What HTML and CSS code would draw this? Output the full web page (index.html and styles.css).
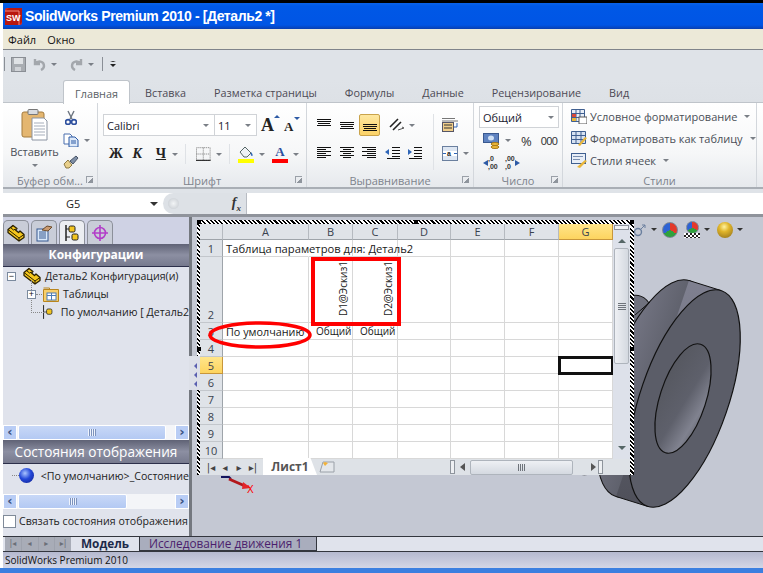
FILE: index.html
```html
<!DOCTYPE html>
<html lang="ru">
<head>
  <meta charset="UTF-8" />
  <title>SolidWorks Premium 2010 - [Деталь2 *]</title>
  <link rel="stylesheet" href="styles.css">
</head>
<body>
  <svg class="defs" width="0" height="0">
    <symbol id="al-t" viewBox="0 0 14 14"><path d="M0 1.5h14M0 3.5h14M1 5.5h12M0 7.5h14" stroke="#111" fill="none"/></symbol>
    <symbol id="al-m" viewBox="0 0 14 14"><path d="M0 4.5h14M0 6.5h14M1 8.5h12M0 10.5h14" stroke="#111" fill="none"/></symbol>
    <symbol id="al-b" viewBox="0 0 14 14"><path d="M0 6.5h14M0 8.5h14M1 10.5h12M0 12.5h14" stroke="#111" fill="none"/></symbol>
    <symbol id="al-l" viewBox="0 0 14 14"><path d="M0 1.5h14M0 3.5h9M0 5.5h14M0 7.5h9M0 9.5h14M0 11.5h9" stroke="#111" fill="none"/></symbol>
    <symbol id="al-c" viewBox="0 0 14 14"><path d="M0 1.5h14M3 3.5h8M0 5.5h14M3 7.5h8M0 9.5h14M3 11.5h8" stroke="#111" fill="none"/></symbol>
    <symbol id="al-r" viewBox="0 0 14 14"><path d="M0 1.5h14M5 3.5h9M0 5.5h14M5 7.5h9M0 9.5h14M5 11.5h9" stroke="#111" fill="none"/></symbol>
    <symbol id="cube" viewBox="0 0 18 18"><path d="M1 5.5 6 1.5l4 3-1.5 1.5 3 2.5 1.5-1.5 4 3.5v3L12 17 1 8.5z" fill="#f4c61c" stroke="#2b2100" stroke-width="1.3" stroke-linejoin="round"/><path d="M1 5.5 12 14l5-3.5M12 14v3M6 1.5 3.5 3.5l3 2.5 2-1" fill="none" stroke="#2b2100"/></symbol>
    <symbol id="cfg" viewBox="0 0 18 18"><path d="M3 1v16" stroke="#222" stroke-width="1.5"/><path d="M3 5h4M3 13h4" stroke="#222"/><rect x="6" y="2" width="6" height="6" rx="1.5" fill="#f2c521" stroke="#222"/><rect x="9" y="10" width="6" height="6" rx="1.5" fill="#f2c521" stroke="#222"/></symbol>
  </svg>

  <div class="topline"></div>
  <header class="titlebar">
    <svg class="sw-logo" width="17" height="17" viewBox="0 0 17 17"><rect width="17" height="17" rx="2" fill="#d9281e"/><path d="M0 3 4 0h13v14l-3 3H0z" fill="#b8170f"/><path d="M0 3h14v14" fill="none" stroke="#f08a80"/><text x="1" y="13" class="sw-letters">SW</text></svg>
    <span class="title-text">SolidWorks Premium 2010 - [Деталь2 *]</span>
  </header>
  <nav class="menubar"><span>Файл</span><span>Окно</span></nav>

  <div class="qat">
    <i class="qat-sep"></i>
    <svg width="15" height="15" viewBox="0 0 15 15"><rect x=".5" y=".5" width="14" height="14" fill="#a9adb2" stroke="#8a8e94"/><rect x="3" y="1" width="9" height="6" fill="#dfe2e5"/><rect x="4" y="10" width="6" height="4" fill="#d0d3d7"/></svg>
    <svg class="qat-undo" width="13" height="14" viewBox="0 0 13 14"><path d="M2 2v5h5M2 7c3-4 9-3 9 2 0 2-1 3-3 4" fill="none" stroke="#a3a7ac" stroke-width="2.4"/></svg>
    <b class="caret qat-caret"></b>
    <svg class="qat-redo" width="13" height="14" viewBox="0 0 13 14"><path d="M11 2v5H6M11 7C8 3 2 4 2 9c0 2 1 3 3 4" fill="none" stroke="#a3a7ac" stroke-width="2.4"/></svg>
    <b class="caret qat-caret"></b>
    <i class="qat-sep"></i>
    <span class="qat-more"></span>
  </div>

  <div class="tabstrip">
    <span class="rtab active">Главная</span>
    <span class="rtab">Вставка</span>
    <span class="rtab">Разметка страницы</span>
    <span class="rtab">Формулы</span>
    <span class="rtab">Данные</span>
    <span class="rtab">Рецензирование</span>
    <span class="rtab">Вид</span>
  </div>

  <section class="ribbon">
    <div class="group g-clip">
      <div class="group-body clip-body">
        <div class="paste">
          <svg width="27" height="32" viewBox="0 0 27 32"><rect x="1" y="3" width="22" height="25" rx="2" fill="#e4b670" stroke="#a37a3c"/><rect x="7" y="0.5" width="10" height="5" rx="1" fill="#d9dce0" stroke="#777"/><path d="M11 9h12l3 3v19H11z" fill="#fff" stroke="#8b94a2"/><path d="M13 14h10M13 17h11M13 20h11M13 23h11M13 26h11" stroke="#a5adba"/></svg>
          <span>Вставить</span>
          <b class="caret"></b>
        </div>
        <div class="clip-tools">
          <svg width="12" height="15" viewBox="0 0 12 15"><path d="M3 1l4 8M9 1 5 9" stroke="#6d7580" stroke-width="1.4"/><circle cx="3" cy="12" r="2.4" fill="none" stroke="#2d4f9e" stroke-width="1.6"/><circle cx="9" cy="12" r="2.4" fill="none" stroke="#2d4f9e" stroke-width="1.6"/></svg>
          <span class="tool-row"><svg width="16" height="14" viewBox="0 0 16 14"><path d="M1 1h6l2 2v8H1z" fill="#fff" stroke="#4a6fae"/><path d="M6 4h6l3 3v7H6z" fill="#dce8f8" stroke="#2d5aa5"/><path d="M8 8h5M8 10h5" stroke="#2d5aa5"/></svg><b class="caret"></b></span>
          <svg width="16" height="14" viewBox="0 0 16 14"><path d="M1 9l4-4 4 5-3 3H3z" fill="#e9d08c" stroke="#8d7a45"/><path d="M7 6l6-5 2 2-5 6z" fill="#7f8fa6" stroke="#4a5568"/></svg>
        </div>
      </div>
      <div class="group-label"><span>Буфер обм...</span><i class="launcher"></i></div>
    </div>

    <div class="group g-font">
      <div class="group-body font-body">
        <div class="font-row1">
          <span class="combo c-name">Calibri<b class="caret"></b></span>
          <span class="combo c-size">11<b class="caret"></b></span>
          <span class="grow-a">A<em></em></span>
          <span class="shrink-a">A<em></em></span>
        </div>
        <div class="font-row2">
          <span class="fmt f-b">Ж</span>
          <span class="fmt f-i">К</span>
          <span class="fmt f-u">Ч</span>
          <b class="caret"></b>
          <i class="vsep"></i>
          <svg width="15" height="14" viewBox="0 0 15 14"><path d="M.5.5h14v13H.5zM.5 7h14M7.5.5v13" fill="none" stroke="#777" stroke-dasharray="1 1"/><path d="M0 13.5h15" stroke="#111"/></svg>
          <b class="caret"></b>
          <i class="vsep"></i>
          <span class="paint"><svg width="16" height="12" viewBox="0 0 16 12"><path d="M2 6l5-5 6 6-4 4H6z" fill="#eef1f5" stroke="#566"/><path d="M13 6c2 2 2 4 1 4s-2-2-1-4z" fill="#2f66b8"/></svg><i class="swatch yellow"></i></span>
          <b class="caret"></b>
          <span class="paint"><span class="letter-a">A</span><i class="swatch red"></i></span>
          <b class="caret"></b>
        </div>
      </div>
      <div class="group-label"><span>Шрифт</span><i class="launcher"></i></div>
    </div>

    <div class="group g-align">
      <div class="group-body align-body">
        <div class="align-main">
          <div class="align-row top">
            <svg width="14" height="14"><use href="#al-t"/></svg>
            <svg width="14" height="14"><use href="#al-m"/></svg>
            <span class="picked"><svg width="14" height="14"><use href="#al-b"/></svg></span>
            <svg class="orient" width="16" height="14" viewBox="0 0 16 14"><path d="M1 9 9 1M4 12l8-8" stroke="#222" stroke-width="1.6" fill="none"/><path d="M9 12l6-2-2-1" stroke="#555" fill="none"/></svg>
            <b class="caret"></b>
          </div>
          <div class="align-row">
            <svg width="14" height="14"><use href="#al-l"/></svg>
            <svg width="14" height="14"><use href="#al-c"/></svg>
            <svg class="al-right" width="14" height="14"><use href="#al-r"/></svg>
            <svg class="indent" width="15" height="14" viewBox="0 0 15 14"><path d="M7 1.5h8M7 4.5h8M7 7.5h8M7 10.5h8M2 12.5h13" stroke="#111"/><path d="M0 6l4-3v6z" fill="#2f66b8"/></svg>
            <svg class="indent" width="15" height="14" viewBox="0 0 15 14"><path d="M7 1.5h8M7 4.5h8M7 7.5h8M7 10.5h8M2 12.5h13" stroke="#111"/><path d="M5 6 1 3v6z" fill="#2f66b8"/></svg>
          </div>
        </div>
        <i class="vsep tall"></i>
        <div class="align-side">
          <svg width="16" height="15" viewBox="0 0 16 15"><path d="M0 1.5h13M0 4h16" stroke="#777"/><rect x=".5" y="5.5" width="11" height="9" fill="#f0ce8a" stroke="#556"/><path d="M2 8h8M2 11h8" stroke="#333"/><path d="M15 6v4h-3" stroke="#2f66b8" fill="none"/></svg>
          <span class="tool-row"><svg width="16" height="15" viewBox="0 0 16 15"><rect x=".5" y=".5" width="15" height="14" fill="#dde6f2" stroke="#6a7f9e"/><rect x="1" y="5" width="14" height="5" fill="#fff"/><text x="5" y="10" class="mini-a">a</text><path d="M1 7.5h3M12 7.5h3" stroke="#2f66b8"/></svg><b class="caret"></b></span>
        </div>
      </div>
      <div class="group-label"><span>Выравнивание</span><i class="launcher"></i></div>
    </div>

    <div class="group g-num">
      <div class="group-body num-body">
        <span class="combo c-num">Общий<b class="caret"></b></span>
        <div class="num-row">
          <svg width="17" height="16" viewBox="0 0 17 16"><rect x=".5" y=".5" width="15" height="9" fill="#5e82c0" stroke="#39588f"/><ellipse cx="8" cy="5" rx="3" ry="2.5" fill="#cfe0f5"/><ellipse cx="12" cy="11" rx="4" ry="1.5" fill="#efb93a" stroke="#a6791b"/><ellipse cx="12" cy="14" rx="4" ry="1.5" fill="#efb93a" stroke="#a6791b"/></svg>
          <b class="caret"></b>
          <span class="pct">%</span>
          <span class="thou">000</span>
        </div>
        <div class="num-row dec">
          <span class="dec-btn"><em class="ar-l"></em><span>,0<br>,00</span></span>
          <span class="dec-btn"><span>,00<br>,0</span><em class="ar-r"></em></span>
        </div>
      </div>
      <div class="group-label"><span>Число</span><i class="launcher"></i></div>
    </div>

    <div class="group g-styles">
      <div class="group-body styles-body">
        <div class="style-row"><svg width="16" height="15" viewBox="0 0 16 15"><path d="M.5.5h13v12H.5zM.5 4.5h13M.5 8.5h13M5 .5v12M9 .5v12" fill="#e8eef7" stroke="#3f5f90"/><rect x="1" y="5" width="4" height="3" fill="#d8483a"/><rect x="1" y="9" width="4" height="3" fill="#e9b63a"/><rect x="8" y="8" width="8" height="7" fill="#fff" stroke="#555"/></svg><span>Условное форматирование</span><b class="caret"></b></div>
        <div class="style-row"><svg width="16" height="15" viewBox="0 0 16 15"><path d="M.5.5h14v12H.5zM.5 4.5h14M.5 8.5h14M5 .5v12M10 .5v12" fill="#d7e2f2" stroke="#3f5f90"/><path d="M7 14l7-8 2 1-7 8z" fill="#e9b63a"/></svg><span>Форматировать как таблицу</span><b class="caret"></b></div>
        <div class="style-row"><svg width="16" height="15" viewBox="0 0 16 15"><rect x=".5" y=".5" width="14" height="10" fill="#e8eef7" stroke="#3f5f90"/><path d="M2 3.5h10M2 6.5h7" stroke="#7a8fb0"/><path d="M6 14l8-7 2 1-7 7z" fill="#e9b63a"/></svg><span>Стили ячеек</span><b class="caret"></b></div>
      </div>
      <div class="group-label center"><span>Стили</span></div>
    </div>
  </section>

  <div class="formula-bar">
    <div class="namebox"><span>G5</span><b class="caret dark"></b></div>
    <div class="fx-zone"><i class="fx-knob"></i><span class="fx">f<sub>x</sub></span></div>
    <div class="formula-input"></div>
  </div>

  <main class="workspace">
    <aside class="panel">
      <div class="panel-tabs">
        <span class="ptab"><svg width="18" height="18"><use href="#cube"/></svg></span>
        <span class="ptab"><svg width="18" height="18" viewBox="0 0 18 18"><rect x="2" y="5" width="11" height="12" fill="#d8e8fa" stroke="#36588f"/><path d="M4 8h7M4 10h7M4 12h7M4 14h7" stroke="#36588f"/><path d="M7 6l5-4 5 1-4 4z" fill="#c99a70" stroke="#6d4c2c"/></svg></span>
        <span class="ptab current"><svg width="18" height="18"><use href="#cfg"/></svg></span>
        <span class="ptab"><svg width="16" height="16" viewBox="0 0 16 16"><circle cx="8" cy="8" r="5.5" fill="none" stroke="#b23ec8" stroke-width="1.6"/><path d="M8 0v16M0 8h16" stroke="#b23ec8" stroke-width="1.6"/></svg></span>
      </div>
      <h2 class="panel-head">Конфигурации</h2>
      <ul class="tree">
        <li class="node lvl0"><i class="box">−</i><svg width="18" height="18"><use href="#cube"/></svg><span>Деталь2 Конфигурация(и)</span></li>
        <li class="node lvl1"><i class="box">+</i><svg width="16" height="15" viewBox="0 0 16 15"><path d="M.5 2.5h15v12H.5z" fill="#f8cf6a" stroke="#b9851d"/><path d="M.5 1h6v2" fill="none" stroke="#b9851d"/><rect x="4" y="6" width="9" height="7" fill="#fff" stroke="#4c7db8"/><path d="M4 8.5h9M8.5 6v7" stroke="#4c7db8"/></svg><span>Таблицы</span></li>
        <li class="node lvl2"><svg width="14" height="18" viewBox="0 0 14 18"><path d="M2 0v18" stroke="#333" stroke-width="1.4"/><path d="M2 9h5" stroke="#333"/><rect x="6" y="5" width="7" height="7" rx="2" fill="#f2c521" stroke="#222"/></svg><span>По умолчанию [ Деталь2</span></li>
      </ul>
      <div class="scrollbar"><em class="sb-btn">‹</em><span class="sb-thumb wide"><u></u></span><em class="sb-btn right">›</em></div>
      <h2 class="panel-head small">Состояния отображения</h2>
      <div class="state-row"><i class="dots"></i><i class="ball"></i><span>&lt;По умолчанию&gt;_Состояние</span></div>
      <div class="scrollbar lower"><em class="sb-btn">‹</em><span class="sb-thumb"><u></u></span><em class="sb-btn right">›</em></div>
      <label class="link-row"><i class="check"></i><span>Связать состояния отображения</span></label>
    </aside>

    <div class="viewport">
      <svg class="part" width="200" height="270" viewBox="0 0 200 270">
        <defs>
          <linearGradient id="rim" gradientUnits="userSpaceOnUse" x1="0" y1="25" x2="0" y2="250"><stop offset="0" stop-color="#7f8090"/><stop offset=".25" stop-color="#797a89"/><stop offset=".5" stop-color="#5e606b"/><stop offset="1" stop-color="#4f505a"/></linearGradient>
          <linearGradient id="bore" x1="0.8" y1="0" x2="0.2" y2="1"><stop offset="0" stop-color="#55575f"/><stop offset=".55" stop-color="#5e606b"/><stop offset=".85" stop-color="#80828f"/><stop offset="1" stop-color="#686a75"/></linearGradient>
        </defs>
        <ellipse cx="67" cy="130" rx="94" ry="35" transform="rotate(-71 67 130)" fill="#70727e" stroke="#111"/>
        <ellipse cx="109.5" cy="133.5" rx="114" ry="44" transform="rotate(-71 109.5 133.5)" fill="url(#rim)" stroke="#111"/>
        <path d="M178 35.5 146 25.5 73 241.5 105 251.5z" fill="url(#rim)"/>
        <path d="M178 35.5 146 25.5M105 251.5 73 241.5" stroke="#111" fill="none"/>
        <path d="M92 60 107 47" stroke="#111" fill="none"/>
        <ellipse cx="141.5" cy="143.5" rx="114" ry="44" transform="rotate(-71 141.5 143.5)" fill="#5b5d68" stroke="#111" stroke-width="1.2"/>
        <ellipse cx="140" cy="143.5" rx="57" ry="23" transform="rotate(-72 140 143.5)" fill="url(#bore)" stroke="#111" stroke-width="1.2"/>
      </svg>

      <div class="hud">
        <svg width="14" height="14" viewBox="0 0 14 14"><circle cx="5" cy="9" r="3.5" fill="none" stroke="#6a7f9e" stroke-width="1.4"/><path d="M8 6l4-4M9 2h3v3" fill="none" stroke="#6a7f9e"/></svg><b class="caret dark"></b>
        <i class="globe"></i>
        <span class="hud-scene"><i class="globe small"></i><i class="checker"></i></span><b class="caret dark"></b>
        <i class="gold"></i><b class="caret dark"></b>
      </div>

      <div class="triad"><svg width="36" height="18" viewBox="0 0 36 18"><path d="M0 1h8l2 2" stroke="#13135e" stroke-width="2" fill="none"/><path d="M8 3 24 10" stroke="#b3161a" stroke-width="3"/><path d="M22 6l8 6-9 1z" fill="#e3252b"/><text x="26" y="17" class="axis">X</text></svg></div>

      <div class="sheet-window">
        <i class="handle h-tl"></i><i class="handle h-t"></i><i class="handle h-tr"></i><i class="handle h-r"></i><i class="handle h-l"></i>
        <div class="sheet-top">
          <table class="sheet">
            <colgroup><col class="c0"><col class="ca"><col class="cb"><col class="cc"><col class="cd"><col class="ce"><col class="cf"><col class="cg"></colgroup>
            <tr class="r-head"><th class="corner"></th><th>A</th><th>B</th><th>C</th><th>D</th><th>E</th><th>F</th><th class="sel">G</th></tr>
            <tr><th>1</th><td class="over">Таблица параметров для: Деталь2</td><td></td><td></td><td></td><td></td><td></td><td></td></tr>
            <tr class="r-tall"><th class="bottom">2</th><td></td><td class="vert"><span>D1@Эскиз1</span></td><td class="vert"><span>D2@Эскиз1</span></td><td></td><td></td><td></td><td></td></tr>
            <tr><th>3</th><td class="ind">По умолчанию</td><td class="gen">Общий</td><td class="gen">Общий</td><td></td><td></td><td></td><td></td></tr>
            <tr><th>4</th><td></td><td></td><td></td><td></td><td></td><td></td><td></td></tr>
            <tr><th class="sel">5</th><td></td><td></td><td></td><td></td><td></td><td></td><td class="active-cell"></td></tr>
            <tr><th>6</th><td></td><td></td><td></td><td></td><td></td><td></td><td></td></tr>
            <tr><th>7</th><td></td><td></td><td></td><td></td><td></td><td></td><td></td></tr>
            <tr><th>8</th><td></td><td></td><td></td><td></td><td></td><td></td><td></td></tr>
            <tr><th>9</th><td></td><td></td><td></td><td></td><td></td><td></td><td></td></tr>
            <tr><th>10</th><td></td><td></td><td></td><td></td><td></td><td></td><td></td></tr>
          </table>
          <div class="vscroll">
            <i class="split-v"></i>
            <b class="tri up"></b>
            <span class="v-thumb"><u></u></span>
            <b class="tri down"></b>
          </div>
        </div>
        <div class="sheet-tabs">
          <div class="sheet-nav"><span>|◂</span><span>◂</span><span>▸</span><span>▸|</span></div>
          <span class="sheet-tab">Лист1</span>
          <svg class="new-sheet" width="16" height="12" viewBox="0 0 16 12"><path d="M1 11 4 1h11v10z" fill="#e4e7eb" stroke="#9aa0a8"/><path d="M4 2l2 3 3-3-3-1z" fill="#f2b23a"/></svg>
          <i class="split-h first"></i>
          <b class="tri left"></b>
          <span class="h-thumb"><u></u></span>
          <b class="tri right"></b>
          <i class="split-h"></i>
        </div>
        <svg class="annot" width="210" height="135" viewBox="0 0 210 135">
          <rect x="116" y="39" width="86" height="65" fill="none" stroke="#f00" stroke-width="4"/>
          <ellipse cx="63" cy="115" rx="50" ry="12" fill="none" stroke="#f00" stroke-width="3.5"/>
        </svg>
      </div>
    </div>
    <div class="splitter-arrows"><em></em><em></em><em></em></div>
  </main>

  <div class="model-tabs">
    <div class="nav-btns"><span>|◂</span><span>◂</span><span>▸</span><span>▸|</span></div>
    <span class="mtab on">Модель</span>
    <span class="mtab">Исследование движения 1</span>
  </div>
  <footer class="statusbar">SolidWorks Premium 2010</footer>
  <div class="taskbar"></div>
</body>
</html>
```

FILE: styles.css
```css
* {
  box-sizing: border-box;
}

html, body {
  margin: 0;
  padding: 0;
}

body {
  width: 763px;
  height: 573px;
  overflow: hidden;
  background: #fff;
  font-family: 'DejaVu Sans', sans-serif;
  font-size: 10px;
  color: #222;
}

i, em, b, u {
  display: block;
  font-style: normal;
}

.defs {
  position: absolute;
}

.topline {
  height: 3px;
  background: #000;
}

.titlebar {
  height: 26px;
  margin-left: 3px;
  display: flex;
  align-items: center;
  gap: 3px;
  padding: 0 0 0 2px;
  background: linear-gradient(to bottom, #0a63e8 0, #0058e6 3px, #0055e5 22px, #0a3fb0 26px);
}

.sw-letters {
  font: bold 9px 'Liberation Sans', sans-serif;
  fill: #fff;
}

.title-text {
  font: bold 14px 'Liberation Sans', sans-serif;
  letter-spacing: -0.4px;
  color: #fff;
  white-space: nowrap;
}

.menubar {
  height: 20px;
  margin-left: 3px;
  padding-left: 5px;
  display: flex;
  align-items: center;
  gap: 11px;
  background: #ece9d8;
  font: 11px 'Open Sans', sans-serif;
  color: #111;
}

.qat {
  height: 31px;
  margin-left: 3px;
  padding: 7px 0 0 1px;
  display: flex;
  align-items: flex-start;
  border-top: 1px solid #80848a;
  background: #dfe3e8;
}

.qat-sep {
  width: 1px;
  height: 14px;
  background: #8a8f96;
  margin-right: 6px;
}

.qat-undo {
  margin-left: 7px;
}

.qat-redo {
  margin-left: 5px;
}

.qat-caret {
  margin: 6px 8px 0 5px;
}

.qat-more {
  width: 6px;
  height: 6px;
  margin: 4px 0 0 1px;
  border-top: 1px solid #222;
  border-left: 3px solid transparent;
  border-right: 3px solid transparent;
}

.qat-more::after {
  content: '';
  display: block;
  margin: 2px -3px 0;
  border-top: 3px solid #222;
  border-left: 3px solid transparent;
  border-right: 3px solid transparent;
}

.caret {
  width: 0;
  height: 0;
  border-top: 3px solid #7a7f86;
  border-left: 3px solid transparent;
  border-right: 3px solid transparent;
  flex: none;
}

.caret.dark {
  border-top-color: #333;
}

.tabstrip {
  height: 23px;
  margin-left: 3px;
  padding-left: 60px;
  display: flex;
  background: linear-gradient(to bottom, #dfe3e8, #dde1e6);
  border-bottom: 1px solid #bfc4ca;
  font: 10.8px 'Open Sans', sans-serif;
  color: #4d4a55;
}

.rtab {
  padding: 5px 14px 0 14px;
  white-space: nowrap;
}

.rtab:nth-child(2) { padding: 5px 14px 0 15px; }

.rtab.active {
  height: 24px;
  width: 67px;
  padding: 5px 0 0;
  text-align: center;
  background: #fff;
  border: 1px solid #bfc4ca;
  border-bottom: none;
  border-radius: 3px 3px 0 0;
  color: #5a5f66;
}

.ribbon {
  height: 86px;
  margin-left: 3px;
  display: flex;
  border-bottom: 2px solid #a9aeb5;
  background: linear-gradient(to bottom, #ffffff, #f6f7f8 60%, #e6e9ed);
}

.group {
  display: flex;
  flex-direction: column;
  border-right: 1px solid #d3d7dc;
  flex: none;
}

.g-clip { width: 95px; }
.g-font { width: 209px; }
.g-align { width: 167px; }
.g-num { width: 89px; }
.g-styles { width: 194px; }

.group-body {
  height: 70px;
  flex: none;
}

.group-label {
  height: 14px;
  display: flex;
  align-items: center;
  justify-content: center;
  position: relative;
  font: 11px 'Open Sans', sans-serif;
  color: #7d838c;
  white-space: nowrap;
}

.launcher {
  position: absolute;
  right: 4px;
  top: 3px;
  width: 7px;
  height: 7px;
  border-top: 1px solid #9aa0a8;
  border-left: 1px solid #9aa0a8;
  background: linear-gradient(135deg, transparent 55%, #8f959d 55%);
}

.clip-body {
  display: flex;
  padding: 6px 0 0 8px;
}

.paste {
  width: 47px;
  display: flex;
  flex-direction: column;
  align-items: center;
  font: 11px 'Open Sans', sans-serif;
  color: #4a4f57;
}

.paste span {
  margin-top: 3px;
}

.paste .caret {
  margin-top: 5px;
}

.clip-tools {
  margin-left: 5px;
  padding-top: 1px;
  display: flex;
  flex-direction: column;
  align-items: flex-start;
  gap: 8px;
}

.clip-tools > svg:first-child {
  margin-left: 2px;
}

.tool-row {
  display: flex;
  align-items: center;
  gap: 5px;
}

.font-body {
  padding: 11px 0 0 5px;
}

.font-row1 {
  display: flex;
  align-items: center;
  height: 22px;
}

.combo {
  height: 22px;
  display: flex;
  align-items: center;
  justify-content: space-between;
  padding: 0 5px 0 3px;
  border: 1px solid #d0d3d7;
  background: #fff;
  font: 11px 'Open Sans', sans-serif;
  color: #1a1a2e;
}

.c-name { width: 112px; }
.c-size { width: 43px; margin-left: -1px; }

.grow-a, .shrink-a {
  font: bold 18px 'Liberation Serif', serif;
  color: #222;
  position: relative;
}

.grow-a {
  margin-left: 4px;
  width: 20px;
}

.shrink-a {
  margin-left: 3px;
  font-size: 13px;
  margin-top: 3px;
}

.grow-a em, .shrink-a em {
  position: absolute;
  top: 0;
  right: 1px;
  border-left: 3px solid transparent;
  border-right: 3px solid transparent;
  border-bottom: 3px solid #2d5aa5;
}

.shrink-a em {
  top: -2px;
  right: -7px;
  border-bottom: none;
  border-top: 3px solid #2d5aa5;
}

.font-row2 {
  display: flex;
  align-items: center;
  height: 18px;
  margin-top: 9px;
  padding-left: 5px;
}

.fmt {
  font: bold 14px 'Liberation Serif', serif;
  color: #222;
  width: 24px;
  padding-left: 1px;
}

.f-i { font-style: italic; }
.f-u { text-decoration: underline; width: 16px; }

.font-row2 > .caret {
  margin: 0 7px 0 5px;
}

.font-row2 .f-u + .caret {
  margin-left: 2px;
}

.vsep {
  width: 1px;
  height: 20px;
  background: #dfe2e6;
  margin-right: 10px;
}

.vsep + .paint {
  margin-left: -2px;
}

.vsep.tall {
  height: 56px;
  margin: 0;
}

.paint {
  width: 16px;
  display: flex;
  flex-direction: column;
  align-items: center;
}

.letter-a {
  font: bold 13px/12px 'Liberation Serif', serif;
  color: #2d4f9e;
}

.swatch {
  width: 16px;
  height: 4px;
  margin-top: 1px;
}

.swatch.yellow { background: #ffff00; }
.swatch.red { background: #ff0000; }

.align-body {
  display: flex;
  padding: 11px 0 0 10px;
}

.align-main {
  width: 116px;
}

.align-row {
  display: flex;
  align-items: center;
  gap: 9px;
  height: 22px;
}

.align-row.top {
  margin-bottom: 6px;
}

.picked {
  width: 21px;
  height: 22px;
  margin-left: -4px;
  display: flex;
  align-items: center;
  justify-content: center;
  border: 1px solid #c9a34b;
  border-radius: 2px;
  background: linear-gradient(to bottom, #fde7a0, #fbd268);
}

.al-right {
  margin-left: -1px;
}

.indent + .indent {
  margin-left: -2px;
}

.align-row .caret {
  margin-left: -5px;
}

.align-side {
  padding: 3px 0 0 8px;
  display: flex;
  flex-direction: column;
  gap: 14px;
}

.mini-a {
  font: bold 7px 'Liberation Sans', sans-serif;
  fill: #222;
}

.num-body {
  padding: 3px 0 0 5px;
}

.c-num {
  width: 80px;
  padding-right: 4px;
}

.num-row {
  display: flex;
  align-items: center;
  margin-top: 4px;
  padding-left: 4px;
  height: 17px;
}

.num-row .caret {
  margin-left: 5px;
}

.pct {
  margin-left: 10px;
  font: 13px 'Open Sans', sans-serif;
  color: #333;
}

.thou {
  margin-left: 9px;
  font: 11px 'Liberation Sans', sans-serif;
  letter-spacing: -0.6px;
  color: #333;
}

.num-row.dec {
  gap: 6px;
  margin-top: 5px;
}

.dec-btn {
  width: 16px;
  display: flex;
  align-items: center;
  font: bold 7px/8px 'Liberation Sans', sans-serif;
  color: #333;
}

.ar-l, .ar-r {
  border-top: 3px solid transparent;
  border-bottom: 3px solid transparent;
  flex: none;
}

.ar-l { border-right: 5px solid #2d5aa5; }
.ar-r { border-left: 5px solid #2d5aa5; }

.styles-body {
  padding: 5px 0 0 8px;
  display: flex;
  flex-direction: column;
  gap: 6px;
}

.style-row {
  display: flex;
  align-items: center;
  gap: 3px;
  height: 16px;
  font: 11px 'Open Sans', sans-serif;
  color: #4a4f57;
  white-space: nowrap;
}

.style-row .caret {
  margin-left: 4px;
}

.formula-bar {
  height: 28px;
  margin-left: 3px;
  display: flex;
  border-top: 4px solid #dfe3e8;
  border-bottom: 3px solid #8f939b;
  background: #fff;
}

.namebox {
  width: 160px;
  display: flex;
  align-items: center;
  justify-content: space-between;
  padding: 0 0 0 63px;
  font: 11px 'Open Sans', sans-serif;
  color: #222;
}

.namebox .caret {
  margin-right: 5px;
  border-top-width: 4px;
  border-left-width: 4px;
  border-right-width: 4px;
}

.fx-zone {
  width: 84px;
  display: flex;
  align-items: center;
  justify-content: space-between;
  padding: 0 3px 0 5px;
  border-right: 1px solid #b8bcc3;
  background: #dde1e6;
  border-radius: 12px 0 0 12px;
}

.fx-knob {
  width: 11px;
  height: 11px;
  border-radius: 50%;
  background: radial-gradient(circle, #f2f4f6, #c3c8ce);
}

.fx {
  font: italic bold 14px 'Liberation Serif', serif;
  color: #333;
  margin-right: 2px;
}

.fx sub {
  font-size: 9px;
}

.formula-input {
  flex: 1;
}

.workspace {
  height: 319px;
  margin-left: 3px;
  display: flex;
  position: relative;
}

.panel {
  width: 189px;
  flex: none;
  display: flex;
  flex-direction: column;
  background: #e0e3ec;
  border-right: 3px solid #74787f;
  font: 10.6px 'Open Sans', sans-serif;
  color: #222;
}

.panel-tabs {
  height: 27px;
  display: flex;
  gap: 2px;
  padding: 3px 0 0;
  background: #cfd2e4;
}

.ptab {
  width: 26px;
  height: 24px;
  display: flex;
  align-items: center;
  justify-content: center;
  background: #c9cdd8;
  border: 1px solid #8c909a;
  border-bottom: none;
  border-radius: 5px 5px 0 0;
}

.ptab.current {
  background: #eceef2;
}

.panel-head {
  margin: 0;
  height: 23px;
  text-align: center;
  font: bold 12px/22px 'Open Sans', sans-serif;
  color: #fff;
  background: linear-gradient(to bottom, #5f6275, #8c8fa2 50%, #777a8e);
  border-bottom: 1px solid #2c2f4a;
}

.panel-head.small {
  font: 13.6px/23px 'Open Sans', sans-serif;
  height: 24px;
}

.tree {
  list-style: none;
  margin: 0;
  padding: 0 0 0 4px;
  height: 158px;
  overflow: hidden;
}

.node {
  height: 18px;
  display: flex;
  align-items: center;
  gap: 4px;
  white-space: nowrap;
  position: relative;
}

.lvl1 {
  padding-left: 20px;
}

.lvl1::before {
  content: '';
  position: absolute;
  left: 24px;
  top: -5px;
  height: 10px;
  border-left: 1px dotted #888;
}

.lvl1::after {
  content: '';
  position: absolute;
  left: 29px;
  top: 9px;
  width: 6px;
  border-top: 1px dotted #888;
}

.lvl2 {
  padding-left: 35px;
  gap: 8px;
}

.lvl2::before {
  content: '';
  position: absolute;
  left: 24px;
  top: -5px;
  height: 14px;
  width: 12px;
  border-left: 1px dotted #888;
  border-bottom: 1px dotted #888;
}

.box {
  width: 9px;
  height: 9px;
  border: 1px solid #7b8a9e;
  background: #fff;
  font: 9px/7px 'Liberation Sans', sans-serif;
  text-align: center;
  color: #111;
  margin-right: 3px;
  position: relative;
  z-index: 1;
}

.scrollbar {
  height: 15px;
  display: flex;
  justify-content: space-between;
  background: #f4f5f8;
  position: relative;
}

.scrollbar.lower {
  margin-top: 7px;
}

.sb-btn {
  width: 14px;
  text-align: center;
  background: #b9cdf5;
  border: 1px solid #fff;
  font: bold 13px/11px 'DejaVu Sans', sans-serif;
  color: #39517e;
}

.sb-thumb {
  position: absolute;
  left: 15px;
  top: 0;
  width: 109px;
  height: 15px;
  background: linear-gradient(to bottom, #c8d8f7, #b3c9f3);
  border: 1px solid #fff;
  border-radius: 2px;
}

.sb-thumb.wide {
  width: 148px;
}

.sb-thumb u {
  width: 8px;
  height: 7px;
  margin: 3px auto 0;
  background: repeating-linear-gradient(to right, #eef3fd 0 1px, #7d93bd 1px 2px);
}

.state-row {
  height: 23px;
  display: flex;
  align-items: center;
  white-space: nowrap;
  overflow: hidden;
  padding-left: 9px;
}

.dots {
  width: 11px;
  border-top: 1px dotted #888;
}

.ball {
  width: 15px;
  height: 15px;
  flex: none;
  border-radius: 50%;
  margin-right: 7px;
  background: radial-gradient(circle at 40% 35%, #a9c4ff, #2347d8 45%, #101f88);
}

.link-row {
  margin-top: 2px;
  height: 20px;
  display: flex;
  align-items: center;
  gap: 3px;
  white-space: nowrap;
}

.check {
  width: 13px;
  height: 13px;
  flex: none;
  background: #fff;
  border: 1px solid #7f8a99;
}

.viewport {
  flex: 1;
  position: relative;
  overflow: hidden;
  background: #c4c8d3;
}

.part {
  position: absolute;
  left: 351px;
  top: 38px;
}

.hud {
  position: absolute;
  left: 441px;
  top: 4px;
  display: flex;
  align-items: center;
  gap: 4px;
}

.globe {
  width: 16px;
  height: 16px;
  border-radius: 50%;
  margin: 0 2px 0 1px;
  background: conic-gradient(#e33a2b 0 120deg, #2fa13c 120deg 240deg, #2e63d4 240deg 360deg);
  border: 1px solid #7d8796;
}

.hud-scene {
  display: flex;
  flex-direction: column;
  align-items: center;
}

.globe.small {
  margin: 0;
  width: 13px;
  height: 13px;
}

.checker {
  width: 16px;
  height: 5px;
  margin-top: -1px;
  background: repeating-conic-gradient(#222 0 25%, #fff 0 50%) 0 0 / 4px 4px;
}

.gold {
  width: 16px;
  height: 16px;
  margin-left: 3px;
  border-radius: 50%;
  background: radial-gradient(circle at 45% 30%, #fff3a0, #e0b52a 35%, #8a6a1a);
}

.triad {
  position: absolute;
  left: 29px;
  top: 259px;
}

.axis {
  font: 10px 'Liberation Sans', sans-serif;
  fill: #f00;
}

.sheet-window {
  position: absolute;
  left: 5px;
  top: 3px;
  width: 437px;
  height: 255px;
  padding: 4px 4px 0 3px;
  background: repeating-linear-gradient(45deg, #000 0 1.5px, #fff 1.5px 3px);
}

.handle {
  position: absolute;
  width: 4px;
  height: 4px;
  background: #000;
}

.h-tl { left: 0; top: 0; }
.h-t { left: 217px; top: 0; }
.h-tr { right: 0; top: 0; }
.h-r { right: 0; top: 127px; }
.h-l { left: 0; top: 127px; }

.sheet-top {
  display: flex;
  height: 235px;
  background: #fff;
}

.sheet {
  border-collapse: separate;
  border-spacing: 0;
  table-layout: fixed;
  width: 413px;
  height: 235px;
  flex: none;
  font: 11px 'Open Sans', sans-serif;
  color: #1a1a1a;
}

.c0 { width: 23px; }
.ca { width: 86px; }
.cb { width: 44px; }
.cc { width: 45px; }
.cd { width: 53px; }
.ce { width: 54px; }
.cf { width: 54px; }
.cg { width: 54px; }

.sheet tr {
  height: 17px;
}

.sheet .r-head {
  height: 16px;
}

.sheet .r-tall {
  height: 66px;
}

.sheet th {
  padding: 0;
  font-weight: normal;
  font-size: 11px;
  color: #39424e;
  background: #dfe3e8;
  border-right: 1px solid #9ea4aa;
  border-bottom: 1px solid #c3c7cc;
}

.r-head th {
  border-bottom-color: #9ea4aa;
  border-right-color: #b5bac0;
}

.sheet th.bottom {
  vertical-align: bottom;
}

.sheet th.sel {
  background: linear-gradient(to bottom, #ffe58a, #fdd45f);
  border-bottom-color: #c8963a;
  border-right-color: #c8963a;
}

.sheet td {
  padding: 0 2px 0 3px;
  height: 17px;
  line-height: 15px;
  white-space: nowrap;
  border-right: 1px solid #d8d8d8;
  border-bottom: 1px solid #d8d8d8;
}

.sheet td.over {
  overflow: visible;
  font-size: 11.2px;
  border-right-color: transparent;
}

.sheet td.ind {
  font-size: 10.8px;
}

.sheet td.gen {
  padding-left: 7px;
  font-size: 10px;
}

.sheet td.vert {
  padding: 0 1px 2px 0;
  vertical-align: bottom;
  text-align: right;
  font-size: 10px;
}

.vert span {
  display: inline-block;
  writing-mode: vertical-rl;
  transform: rotate(180deg);
}

.active-cell {
  outline: 3px solid #111;
  outline-offset: -2px;
}

.vscroll {
  flex: 1;
  display: flex;
  flex-direction: column;
  align-items: center;
  background: #dde1ea;
}

.split-v {
  width: 15px;
  height: 5px;
  margin-top: 1px;
  background: #eef0f3;
  border: 1px solid #8e949c;
}

.tri {
  width: 0;
  height: 0;
  flex: none;
}

.tri.up {
  margin-top: 9px;
  border-left: 4px solid transparent;
  border-right: 4px solid transparent;
  border-bottom: 4px solid #566;
}

.tri.down {
  margin-top: 82px;
  border-left: 4px solid transparent;
  border-right: 4px solid transparent;
  border-top: 4px solid #566;
}

.v-thumb {
  width: 15px;
  height: 116px;
  margin-top: 5px;
  background: linear-gradient(to right, #eef0f4, #d4d9e0);
  border: 1px solid #aeb4bc;
  border-radius: 2px;
  display: flex;
  align-items: center;
  justify-content: center;
}

.v-thumb u {
  width: 8px;
  height: 7px;
  background: repeating-linear-gradient(to bottom, #6f747b 0 1px, transparent 1px 2px);
}

.sheet-tabs {
  height: 16px;
  display: flex;
  align-items: center;
  background: #dee2e7;
}

.sheet-nav {
  display: flex;
  width: 63px;
  padding-left: 6px;
  gap: 4px;
  font: 10px 'DejaVu Sans', sans-serif;
  color: #444;
}

.sheet-nav span {
  width: 10px;
  text-align: center;
  white-space: nowrap;
}

.sheet-tab {
  width: 54px;
  height: 17px;
  margin-top: -1px;
  background: #fff;
  text-align: center;
  font: bold 12px/17px 'Open Sans', sans-serif;
  color: #555;
  clip-path: polygon(0 0, 88% 0, 100% 100%, 0 100%);
}

.new-sheet {
  margin-left: 2px;
}

.split-h {
  width: 5px;
  height: 14px;
  background: #eef0f3;
  border: 1px solid #8e949c;
  margin-left: 2px;
}

.split-h.first {
  margin-left: 115px;
}

.tri.left {
  margin-left: 5px;
  border-top: 4px solid transparent;
  border-bottom: 4px solid transparent;
  border-right: 5px solid #555;
}

.tri.right {
  margin-left: 18px;
  border-top: 4px solid transparent;
  border-bottom: 4px solid transparent;
  border-left: 5px solid #555;
}

.h-thumb {
  width: 103px;
  height: 15px;
  margin-left: 5px;
  background: linear-gradient(to bottom, #eef0f4, #d4d9e0);
  border: 1px solid #aeb4bc;
  border-radius: 2px;
  display: flex;
  align-items: center;
  justify-content: center;
}

.h-thumb u {
  width: 7px;
  height: 7px;
  background: repeating-linear-gradient(to right, #6f747b 0 1px, transparent 1px 2px);
}

.annot {
  position: absolute;
  left: 0;
  top: 0;
  overflow: visible;
}

.splitter-arrows {
  position: absolute;
  left: 186px;
  top: 139px;
  width: 11px;
  height: 34px;
  padding: 7px 0 0 5px;
  display: flex;
  flex-direction: column;
  gap: 3px;
  background: #dde0e8;
}

.splitter-arrows em {
  width: 3px;
  border-top: 3px solid transparent;
  border-bottom: 3px solid transparent;
  border-right: 3px solid #5a5fb0;
}

.model-tabs {
  height: 16px;
  margin-left: 3px;
  padding-left: 2px;
  display: flex;
  align-items: center;
  border-top: 1px solid #33363e;
  border-bottom: 1px solid #33363e;
  background: #e0e3ec;
  font: 11.8px 'Open Sans', sans-serif;
}

.nav-btns {
  width: 66px;
  height: 14px;
  display: flex;
  gap: 1px;
  background: #9ea2ad;
  font: 8px/13px 'DejaVu Sans', sans-serif;
  color: #6b6f78;
}

.nav-btns span {
  width: 16px;
  text-align: center;
  background: #a8acb7;
  white-space: nowrap;
}

.mtab {
  width: 178px;
  height: 14px;
  line-height: 13px;
  padding: 0 0 0 9px;
  color: #4b1e6d;
  background: #a9adbd;
  border: 1px solid #33363e;
  border-top: none;
  white-space: nowrap;
}

.mtab.on {
  width: 68px;
  padding: 0;
  text-align: center;
  font-weight: bold;
  color: #1d2a4a;
  background: #e0e3ec;
  border: none;
}

.statusbar {
  height: 16px;
  margin-left: 3px;
  padding-left: 2px;
  background: linear-gradient(to bottom, #b5b9cf, #d3d6e6);
  font: 10px/16px 'Open Sans', sans-serif;
  color: #111;
}

.taskbar {
  height: 5px;
  background: #3b7fe0;
}
```
